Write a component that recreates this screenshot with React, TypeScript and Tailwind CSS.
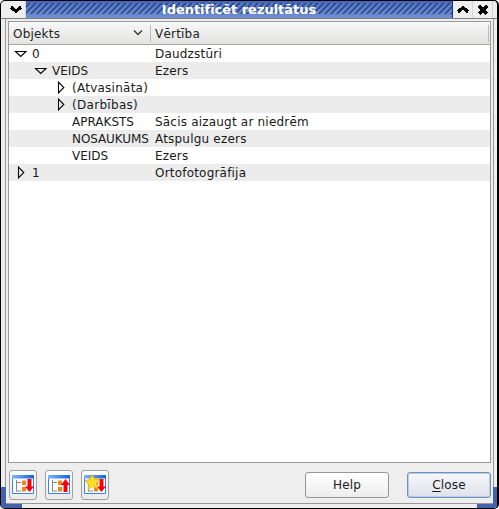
import React from "react";

type Row = { indent: string; arrow?: "down" | "right"; name: string; value: string; spacing?: string };

const rows: Row[] = [
  { indent: "pl-[5px]", arrow: "down", name: "0", value: "Daudzstūri" },
  { indent: "pl-[25px]", arrow: "down", name: "VEIDS", value: "Ezers" },
  { indent: "pl-[45px]", arrow: "right", name: "(Atvasināta)", value: "", spacing: "tracking-[0.25px]" },
  { indent: "pl-[45px]", arrow: "right", name: "(Darbības)", value: "", spacing: "tracking-[0.3px]" },
  { indent: "pl-[45px]", name: "APRAKSTS", value: "Sācis aizaugt ar niedrēm" },
  { indent: "pl-[45px]", name: "NOSAUKUMS", value: "Atspulgu ezers", spacing: "tracking-[-0.1px]" },
  { indent: "pl-[45px]", name: "VEIDS", value: "Ezers" },
  { indent: "pl-[5px]", arrow: "right", name: "1", value: "Ortofotogrāfija" },
];

function Arrow({ dir }: { dir?: "down" | "right" }) {
  return (
    <svg className="h-[17px] w-[18px] shrink-0" viewBox="0 0 18 17" fill="none" stroke="#000" strokeWidth="1.1">
      {dir === "down" && <path d="M1.5 6.5H12L6.75 11.5Z" />}
      {dir === "right" && <path d="M4.5 3.2V13.8L9.8 8.5Z" />}
    </svg>
  );
}

function TitleButton({ kind }: { kind: "down" | "up" | "close" }) {
  return (
    <div className="flex h-[17px] w-5 shrink-0 items-start justify-center border-r border-[#d4d4d4] bg-[#eeeeee] pt-[2px]">
      <svg className="h-[14px] w-[14px]" viewBox="0 0 14 14" fill="none" stroke="#000" strokeWidth="3.2" shapeRendering="crispEdges">
        {kind === "down" && <path d="M2 4L7 8.500L12 4" />}
        {kind === "up" && <path d="M2 9L7 4.500L12 9" />}
        {kind === "close" && <path d="M3 3L11 11M11 3L3 11" />}
      </svg>
    </div>
  );
}

function TreeIcon({ kind }: { kind: "expand" | "collapse" | "star" }) {
  return (
    <svg className="h-[22px] w-[24px]" viewBox="0 0 24 22">
      <defs>
        <linearGradient id="iconbar" x1="0" x2="1" y1="0" y2="0">
          <stop offset="0" stopColor="#7db8fb" />
          <stop offset="1" stopColor="#1464d8" />
        </linearGradient>
      </defs>
      <path d="M1.5 1.5H22.5V19.5H1.5Z" fill="#fff" stroke="#3284e8" />
      <path d="M1 1H23V4.500H1Z" fill="url(#iconbar)" />
      <path d="M5.500 6V17.500M5.500 8.500H10M5.500 17H10" fill="none" stroke="#888" />
      <path d="M11 6.500H15V11H11ZM11 13H15V17.500H11Z" fill="#f58418" />
      {kind === "collapse" ? (
        <path d="M18.500 5L23 11H20.500V18H16.500V11H14Z" fill="#f80008" />
      ) : (
        <path d="M16.500 5H20.500V12.500H23L18.500 18L14 12.500H16.500Z" fill="#f80008" />
      )}
      {kind === "star" && (
        <path d="M9 0.500L11.500 5L16.500 5L13.500 9.500L15 14.500L9.500 12.500L5 15.500L5.500 10.500L2 6.500L7 5.500Z" fill="#fbdd2a" stroke="#eab308" strokeWidth=".8" />
      )}
    </svg>
  );
}

function ToolButton({ kind }: { kind: "expand" | "collapse" | "star" }) {
  return (
    <button className="flex h-[30px] w-[28px] items-center justify-center rounded-[3px] border border-[#a0a0a0] bg-linear-to-b from-white to-[#e9e9e9]">
      <TreeIcon kind={kind} />
    </button>
  );
}

export default function App() {
  return (
    <div className="relative flex h-[509px] w-[499px] flex-col overflow-hidden rounded-[5px] border border-r-2 border-black bg-[#eeeeee] font-['DejaVu_Sans',sans-serif] text-[12px] text-[#1a1a1a]">
      <header className="flex h-[18px] shrink-0 border-b border-[#808080] pr-[4px] pl-[5px]">
        <TitleButton kind="down" />
        <div className="relative flex flex-1 items-start justify-center overflow-hidden border-r border-[#1d2f5c] bg-linear-to-b from-[#4265ba] to-[#7490d3]">
          <svg className="absolute inset-0 h-full w-full">
            <defs>
              <pattern id="hatch" width="6" height="6" patternUnits="userSpaceOnUse">
                <path d="M-1 7L7 -1M-1 1L1 -1M5 7L7 5" stroke="#233f7a" strokeWidth="1.3" />
                <path d="M1 7L7 1M-1 3L3 -1" stroke="#7897d9" strokeWidth=".8" />
              </pattern>
            </defs>
            <rect y="2" width="100%" height="11" fill="url(#hatch)" />
          </svg>
          <h1 className="relative whitespace-nowrap text-[13px] leading-[17px] font-bold tracking-[-0.03px] text-white">Identificēt rezultātus</h1>
        </div>
        <TitleButton kind="up" />
        <TitleButton kind="close" />
      </header>

      <main className="mr-[3px] ml-[4px] flex min-h-0 flex-1 flex-col border-x border-[#999] px-[2px] pt-[2px]">
        <section className="flex h-[442px] flex-col border border-[#999] bg-white">
          <div className="flex h-[23px] shrink-0 items-center border-b border-[#a5a59e] bg-linear-to-b from-[#f8f8f8] to-[#e3e3e2] tracking-[0.2px] text-[#222]">
            <div className="flex h-[17px] w-[142px] items-center justify-between border-r border-[#bbb] pr-[7px] pl-[4px]">
              <span className="pt-[2px]">Objekts</span>
              <svg className="h-[8px] w-[10px]" viewBox="0 0 10 8" fill="none" stroke="#333" strokeWidth="1.3"><path d="M1 1.500L5 5.500L9 1.500" /></svg>
            </div>
            <div className="mr-px flex h-[17px] flex-1 items-center border-r border-[#bbb] pl-[4px]"><span className="pt-[2px]">Vērtība</span></div>
          </div>
          {rows.map((r, i) => (
            <div key={i} className="flex h-[17px] shrink-0 items-start leading-[17px] whitespace-nowrap even:bg-white odd:bg-[#ececec] nth-[2]:bg-white">
              <div className={"flex w-[146px] shrink-0 " + r.indent}><Arrow dir={r.arrow} /><span className={"pt-px " + (r.spacing ?? "")}>{r.name}</span></div>
              <span className="pt-px tracking-[0.2px]">{r.value}</span>
            </div>
          ))}
        </section>

        <footer className="flex items-start pt-[7px]">
          <div className="flex gap-[8px] pl-px">
            <ToolButton kind="expand" /><ToolButton kind="collapse" /><ToolButton kind="star" />
          </div>
          <div className="mt-[2px] ml-auto flex gap-[18px] tracking-[0.2px]">
            <button className="h-[26px] w-[84px] rounded-[3px] border border-[#969696] bg-linear-to-b from-white to-[#ededed]">Help</button>
            <button className="h-[26px] w-[84px] rounded-[3px] border border-[#7090bd] bg-linear-to-b from-[#f5f7fb] to-[#dfe2e9] shadow-[inset_0_0_0_1px_#b9cce5]"><span className="underline underline-offset-2">C</span>lose</button>
          </div>
        </footer>
      </main>
      <div className="mx-[4px] h-[5px] shrink-0 border-t border-[#999]" />
      <div className="absolute bottom-0 left-0 h-[21px] w-[21px] rounded-bl-[4px] border-b-4 border-l-[5px] border-[#4262ae]" />
      <div className="absolute right-0 bottom-0 h-[21px] w-[20px] rounded-br-[4px] border-r-4 border-b-4 border-[#4262ae]" />
    </div>
  );
}
